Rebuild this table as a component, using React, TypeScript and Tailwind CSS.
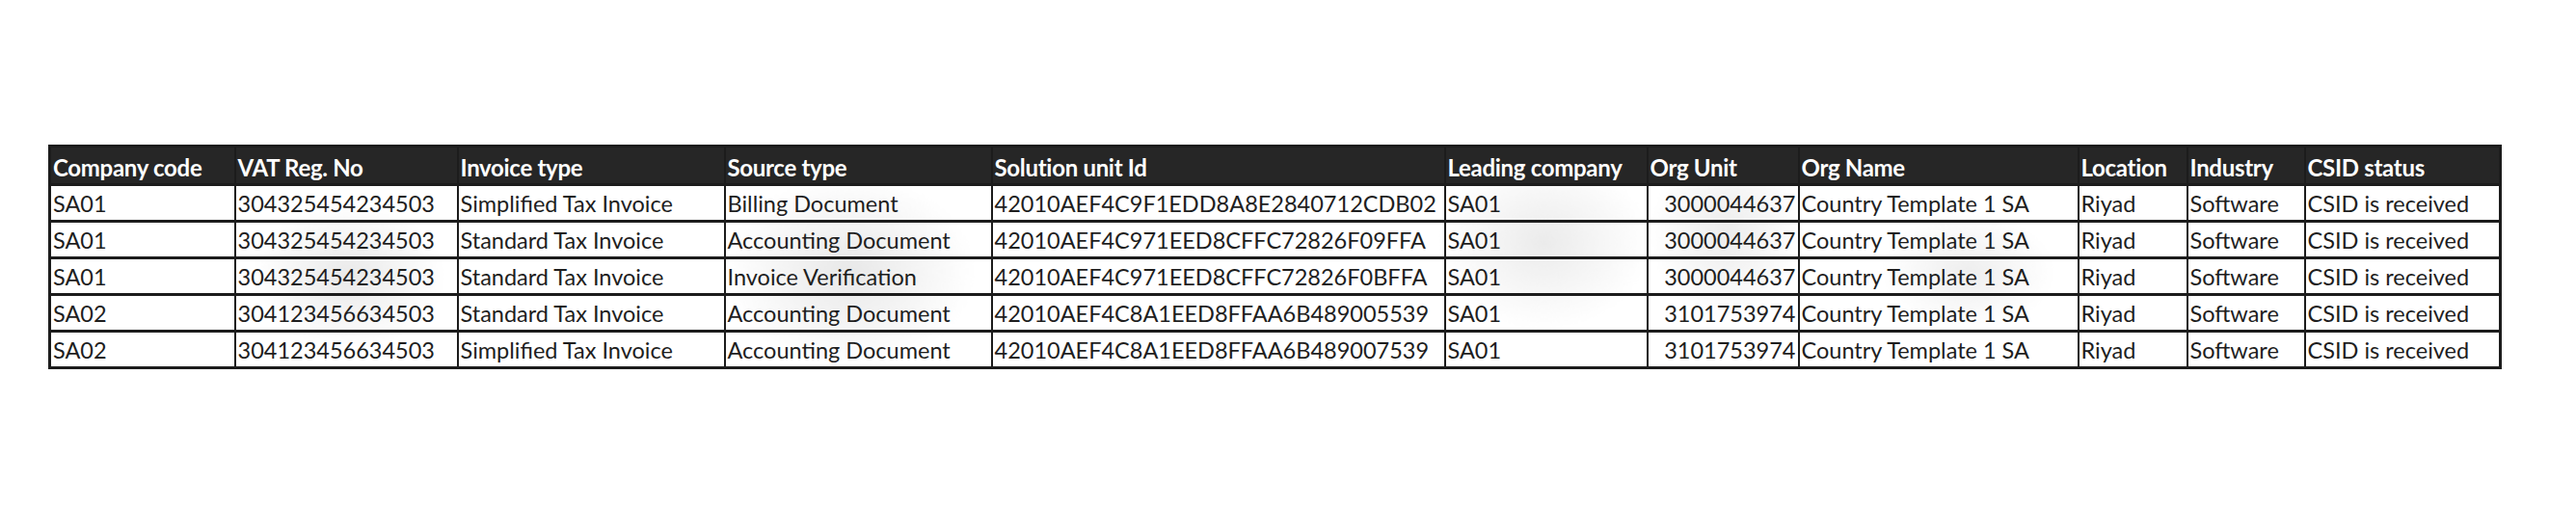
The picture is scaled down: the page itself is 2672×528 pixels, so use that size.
import React from "react";

const COLUMNS = [
  { label: "Company code", width: 192 },
  { label: "VAT Reg. No", width: 231 },
  { label: "Invoice type", width: 277 },
  { label: "Source type", width: 277 },
  { label: "Solution unit Id", width: 470 },
  { label: "Leading company", width: 210 },
  { label: "Org Unit", width: 157, right: true },
  { label: "Org Name", width: 290 },
  { label: "Location", width: 113 },
  { label: "Industry", width: 122 },
  { label: "CSID status", width: 203 },
];

const ROWS = [
  ["SA01", "304325454234503", "Simplified Tax Invoice", "Billing Document", "42010AEF4C9F1EDD8A8E2840712CDB02", "SA01", "3000044637", "Country Template 1 SA", "Riyad", "Software", "CSID is received"],
  ["SA01", "304325454234503", "Standard Tax Invoice", "Accounting Document", "42010AEF4C971EED8CFFC72826F09FFA", "SA01", "3000044637", "Country Template 1 SA", "Riyad", "Software", "CSID is received"],
  ["SA01", "304325454234503", "Standard Tax Invoice", "Invoice Verification", "42010AEF4C971EED8CFFC72826F0BFFA", "SA01", "3000044637", "Country Template 1 SA", "Riyad", "Software", "CSID is received"],
  ["SA02", "304123456634503", "Standard Tax Invoice", "Accounting Document", "42010AEF4C8A1EED8FFAA6B489005539", "SA01", "3101753974", "Country Template 1 SA", "Riyad", "Software", "CSID is received"],
  ["SA02", "304123456634503", "Simplified Tax Invoice", "Accounting Document", "42010AEF4C8A1EED8FFAA6B489007539", "SA01", "3101753974", "Country Template 1 SA", "Riyad", "Software", "CSID is received"],
];

export default function App() {
  return (
    <div className="h-[528px] w-[2672px] bg-white pl-[50px] pt-[150px] font-['Lato','Liberation_Sans',sans-serif] overflow-hidden">
      {/* faint watermark lives in the table background */}
      <table className="table-fixed border-collapse border-[3px] border-[#1c1c1c] text-[23.5px] leading-none text-[#1e1e1e] bg-[radial-gradient(ellipse_100px_75px_at_310px_135px,#e9e9e9,transparent),radial-gradient(ellipse_130px_100px_at_830px_130px,#e8e8e8,transparent),radial-gradient(ellipse_110px_90px_at_1550px_100px,#ebebeb,transparent),radial-gradient(ellipse_80px_90px_at_1740px_90px,#ececec,transparent),radial-gradient(ellipse_90px_60px_at_1990px_130px,#eeeeee,transparent)]">
        <colgroup>
          {COLUMNS.map((c) => (
            <col key={c.label} style={{ width: c.width }} />
          ))}
        </colgroup>
        <thead>
          <tr className="h-[40px] bg-[#262626]">
            {COLUMNS.map((c) => (
              <th
                key={c.label}
                className="border-x-2 border-[#1c1c1c] px-[2px] pb-[4px] text-left align-bottom text-[24px] font-bold text-white whitespace-nowrap tracking-[-0.3px]"
              >
                {c.label}
              </th>
            ))}
          </tr>
        </thead>
        <tbody>
          {ROWS.map((row, i) => (
            <tr key={i} className="h-[38px] border-t-[3px] border-[#1c1c1c]">
              {row.map((cell, j) => (
                <td
                  key={j}
                  className={
                    "border-x-2 border-[#1c1c1c] px-[2px] pb-[5px] align-bottom whitespace-nowrap " +
                    (COLUMNS[j].right ? "text-right" : "text-left")
                  }
                >
                  {cell}
                </td>
              ))}
            </tr>
          ))}
        </tbody>
      </table>
    </div>
  );
}
